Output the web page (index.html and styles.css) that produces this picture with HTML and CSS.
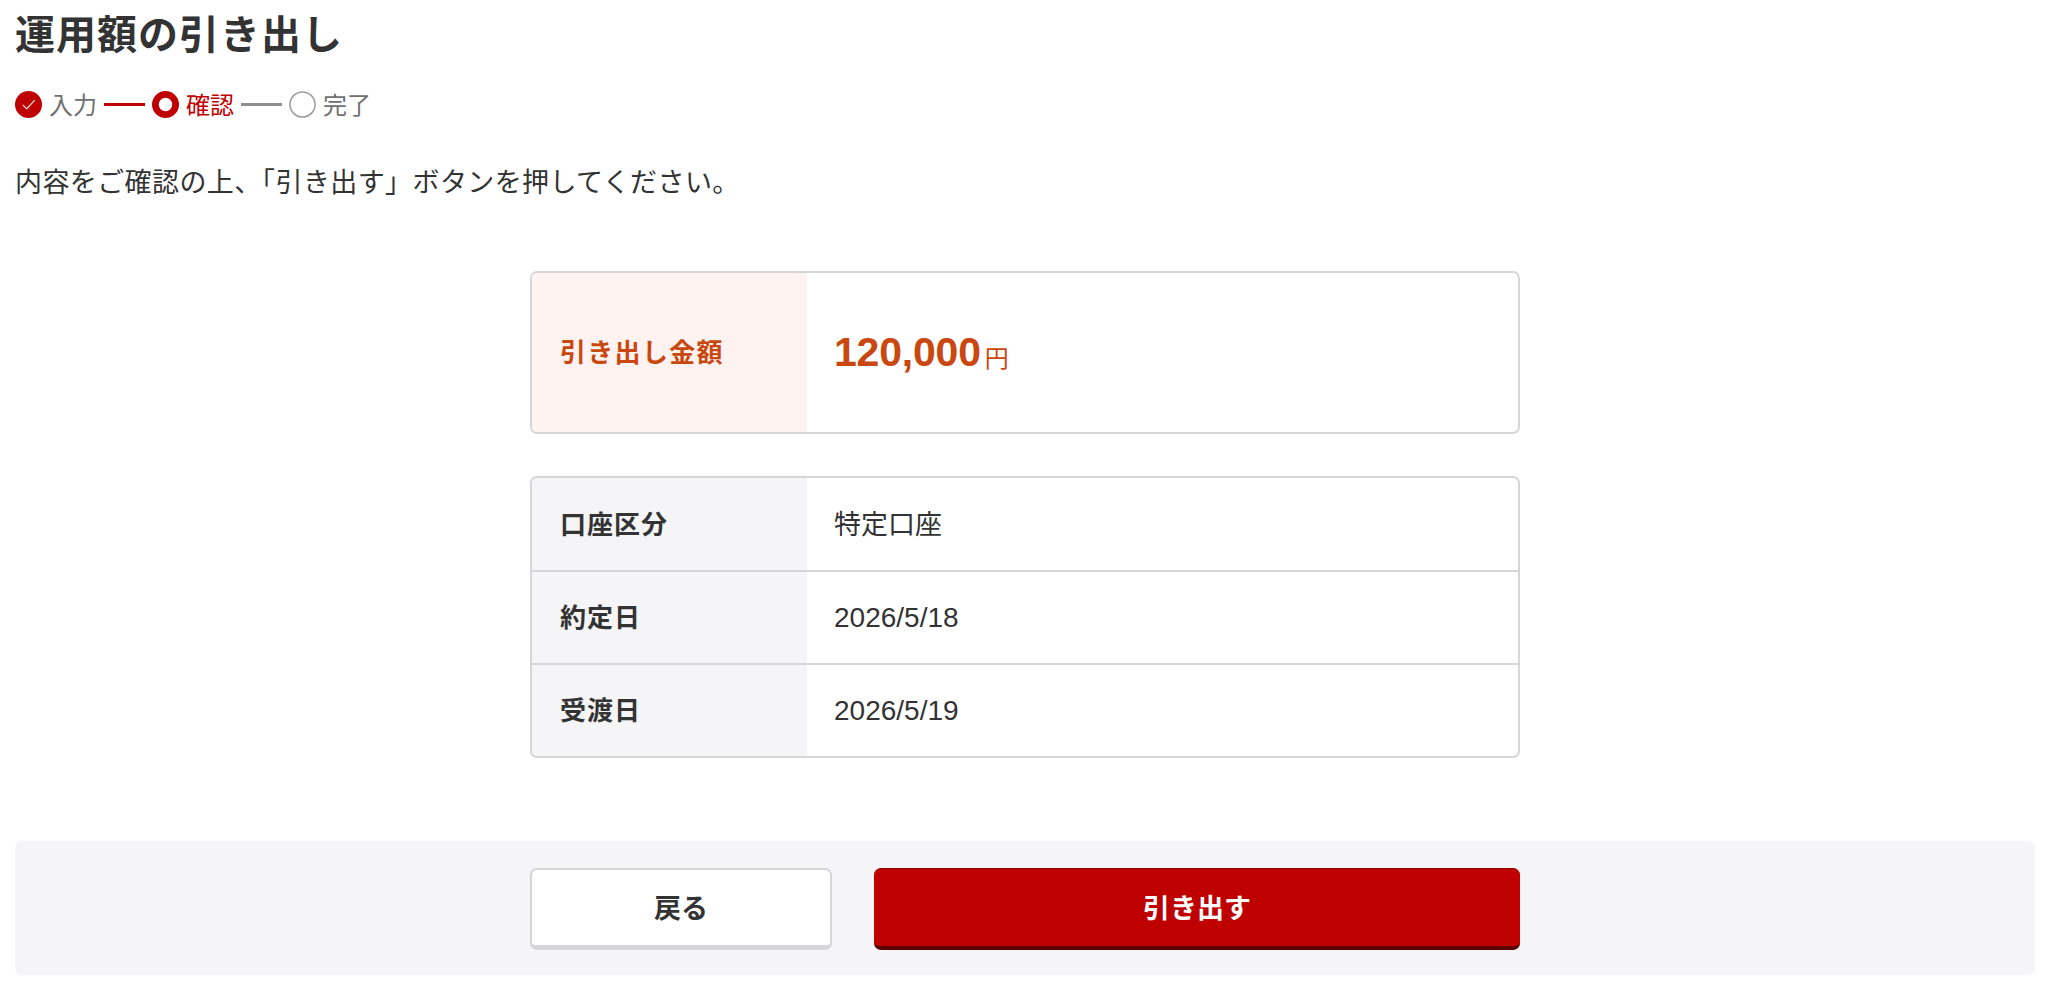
FILE: index.html
```html
<!DOCTYPE html>
<html lang="ja">
<head>
    <meta charset="UTF-8">
    <title>運用額の引き出し</title>
    <link rel="stylesheet" href="styles.css">
</head>
<body>
    <h1 class="title">運用額の引き出し</h1>

    <ol class="steps">
        <li class="step step-done">
            <svg class="step-icon" viewBox="0 0 28 28"><circle cx="14" cy="14" r="14" fill="#bf0000"/><path d="M8 14.5l4.2 4L20.5 9.5" fill="none" stroke="#fff" stroke-width="1.1"/></svg>
            <span class="step-text">入力</span>
        </li>
        <li class="step-line step-line-on"></li>
        <li class="step step-current">
            <svg class="step-icon" viewBox="0 0 28 28"><circle cx="14" cy="14" r="10.5" fill="#fff" stroke="#bf0000" stroke-width="7"/></svg>
            <span class="step-text">確認</span>
        </li>
        <li class="step-line"></li>
        <li class="step">
            <svg class="step-icon" viewBox="0 0 28 28"><circle cx="14" cy="14" r="13" fill="#fff" stroke="#9c9c9c" stroke-width="1.6"/></svg>
            <span class="step-text">完了</span>
        </li>
    </ol>

    <p class="lead">内容をご確認の上、「引き出す」ボタンを押してください。</p>

    <div class="card card-amount">
        <div class="row">
            <div class="row-label">引き出し金額</div>
            <div class="row-value"><span class="amount">120,000</span><span class="unit">円</span></div>
        </div>
    </div>

    <div class="card card-detail">
        <div class="row">
            <div class="row-label">口座区分</div>
            <div class="row-value row-value-text">特定口座</div>
        </div>
        <div class="row">
            <div class="row-label">約定日</div>
            <div class="row-value">2026/5/18</div>
        </div>
        <div class="row">
            <div class="row-label">受渡日</div>
            <div class="row-value">2026/5/19</div>
        </div>
    </div>

    <div class="actions">
        <div class="actions-inner">
            <button class="button button-back">戻る</button>
            <button class="button button-submit">引き出す</button>
        </div>
    </div>
</body>
</html>
```

FILE: styles.css
```css
* {
    box-sizing: border-box;
    margin: 0;
    padding: 0;
}
body {
    padding: 11px 13px 0 15px;
    font-family: "Liberation Sans", "Noto Sans CJK JP", sans-serif;
    color: #333;
    background: #fff;
}
.title {
    font-size: 40px;
    line-height: 48px;
    letter-spacing: 1px;
    font-weight: 700;
}
.steps {
    display: flex;
    align-items: center;
    gap: 7px;
    margin-top: 31px;
    height: 28px;
    list-style: none;
    font-size: 24px;
    color: #707070;
}
.step {
    display: flex;
    align-items: center;
    gap: 7px;
}
.step-text {
    padding-bottom: 2px;
}
.step-icon {
    width: 27px;
    height: 27px;
}
.step-current {
    color: #bf0000;
}
.step-line {
    width: 41px;
    height: 3px;
    background: #8f8f8f;
}
.step-line-on {
    background: #bf0000;
}
.lead {
    margin-top: 45px;
    font-size: 27px;
    line-height: 40px;
    letter-spacing: 0.4px;
}
.card {
    width: 990px;
    margin: 0 auto;
    border: 2px solid #d6d6d9;
    border-radius: 7px;
    overflow: hidden;
}
.card-amount {
    margin-top: 68px;
}
.card-amount .row {
    height: 159px;
}
.card-amount .row-label {
    background: #fff3f1;
    color: #c9480f;
    letter-spacing: 1.3px;
}
.card-detail {
    margin-top: 42px;
}
.row {
    display: flex;
    height: 93px;
}
.card-detail .row:first-child {
    height: 92px;
}
.card-detail .row + .row {
    border-top: 2px solid #d6d6d9;
}
.row-label {
    display: flex;
    align-items: center;
    width: 275px;
    padding: 0 0 4px 28px;
    background: #f5f5f7;
    font-size: 26px;
    font-weight: 700;
    letter-spacing: 1px;
}
.row-value {
    display: flex;
    align-items: center;
    padding-left: 27px;
    font-size: 28px;
}
.row-value-text {
    padding-bottom: 4px;
    font-size: 27px;
}
.amount {
    font-size: 41px;
    font-weight: 700;
    color: #c9480f;
    letter-spacing: -0.2px;
}
.unit {
    margin: 8px 0 0 4px;
    font-size: 24px;
    color: #c9480f;
}
.actions {
    margin-top: 83px;
    padding: 27px 0 25px;
    background: #f5f5f7;
    border-radius: 7px;
}
.actions-inner {
    display: flex;
    gap: 42px;
    width: 990px;
    margin: 0 auto;
}
.button {
    height: 82px;
    padding-bottom: 2px;
    border-radius: 7px;
    font-family: inherit;
    font-size: 27px;
    font-weight: 700;
    cursor: pointer;
}
.button-back {
    width: 302px;
    color: #333;
    background: #fff;
    border: 2px solid #d6d6d9;
    border-bottom-width: 5px;
}
.button-submit {
    flex: 1;
    color: #fff;
    background: #bf0000;
    border: none;
    border-top: 1px solid #8f0000;
    border-bottom: 4px solid #5c0000;
}
```
